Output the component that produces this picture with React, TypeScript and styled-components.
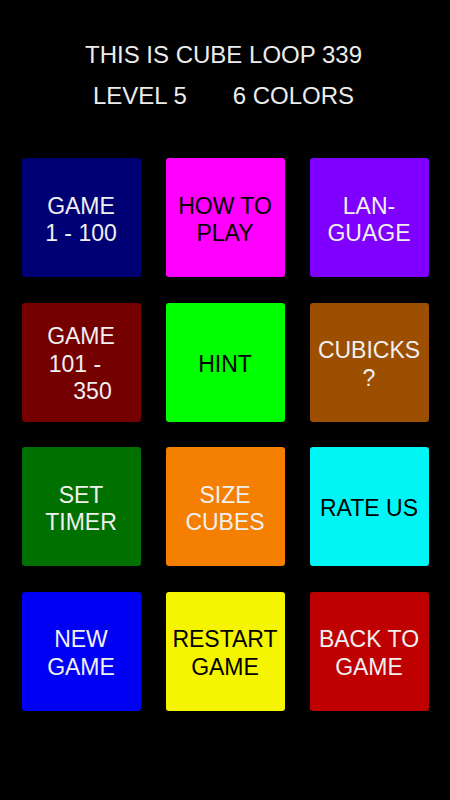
import styled, { createGlobalStyle } from "styled-components"

const GlobalStyle = createGlobalStyle`
  html, body {
    margin: 0;
    padding: 0;
    background: #000;
  }
  body {
    font-family: "Liberation Sans", Arial, sans-serif;
  }
`

type Tile = {
  lines: { text: string; pad?: number; padRight?: number }[]
  bg: string
  dark?: boolean
}

const tiles: Tile[] = [
  { lines: [{ text: "GAME" }, { text: "1 - 100" }], bg: "#000075" },
  { lines: [{ text: "HOW TO" }, { text: "PLAY" }], bg: "#ff00ff", dark: true },
  { lines: [{ text: "LAN-" }, { text: "GUAGE" }], bg: "#7f00ff" },
  { lines: [{ text: "GAME" }, { text: "101 -", padRight: 12 }, { text: "350", pad: 23 }], bg: "#750000" },
  { lines: [{ text: "HINT" }], bg: "#00ff00", dark: true },
  { lines: [{ text: "CUBICKS" }, { text: "?" }], bg: "#9c4f00" },
  { lines: [{ text: "SET" }, { text: "TIMER" }], bg: "#007000" },
  { lines: [{ text: "SIZE" }, { text: "CUBES" }], bg: "#f57f00" },
  { lines: [{ text: "RATE US" }], bg: "#00f5f5", dark: true },
  { lines: [{ text: "NEW" }, { text: "GAME" }], bg: "#0000f5" },
  { lines: [{ text: "RESTART" }, { text: "GAME" }], bg: "#f5f500", dark: true },
  { lines: [{ text: "BACK TO" }, { text: "GAME" }], bg: "#bf0000" },
]

export default function App() {
  return (
    <>
      <GlobalStyle />
      <Screen>
        <Header>
          <HeaderLine>THIS IS CUBE LOOP 339</HeaderLine>
          <HeaderLine>
            <span>LEVEL 5</span>
            <span>6 COLORS</span>
          </HeaderLine>
        </Header>
        <Grid>
          {tiles.map((t, i) => (
            <Cube key={i} $bg={t.bg} $dark={!!t.dark}>
              {t.lines.map((l, j) => (
                <Label key={j} $pad={l.pad ?? 0} $padRight={l.padRight ?? 0}>
                  {l.text}
                </Label>
              ))}
            </Cube>
          ))}
        </Grid>
      </Screen>
    </>
  )
}

const Screen = styled.div`
  width: 450px;
  height: 800px;
  background: #000;
  box-sizing: border-box;
  padding-top: 34px;
  display: flex;
  flex-direction: column;
  align-items: center;
`

const Header = styled.div`
  display: flex;
  flex-direction: column;
  align-items: center;
  color: #ececec;
  font-size: 24px;
`

const HeaderLine = styled.div`
  height: 41px;
  line-height: 41px;
  display: flex;
  gap: 46px;
  white-space: nowrap;
  padding-right: 3px;
`

const Grid = styled.div`
  margin-top: 42px;
  display: grid;
  grid-template-columns: repeat(3, 119px);
  grid-auto-rows: 119px;
  column-gap: 25px;
  row-gap: 25.5px;
`

const Cube = styled.div<{ $bg: string; $dark: boolean }>`
  background: ${p => p.$bg};
  color: ${p => (p.$dark ? "#000" : "#f0f0f0")};
  border-radius: 3px;
  display: flex;
  flex-direction: column;
  align-items: center;
  justify-content: center;
  font-size: 23px;
  line-height: 27.5px;
  padding-top: 5px;
  box-sizing: border-box;
`

const Label = styled.div<{ $pad: number; $padRight: number }>`
  white-space: nowrap;
  padding-left: ${p => p.$pad}px;
  padding-right: ${p => p.$padRight}px;
`
